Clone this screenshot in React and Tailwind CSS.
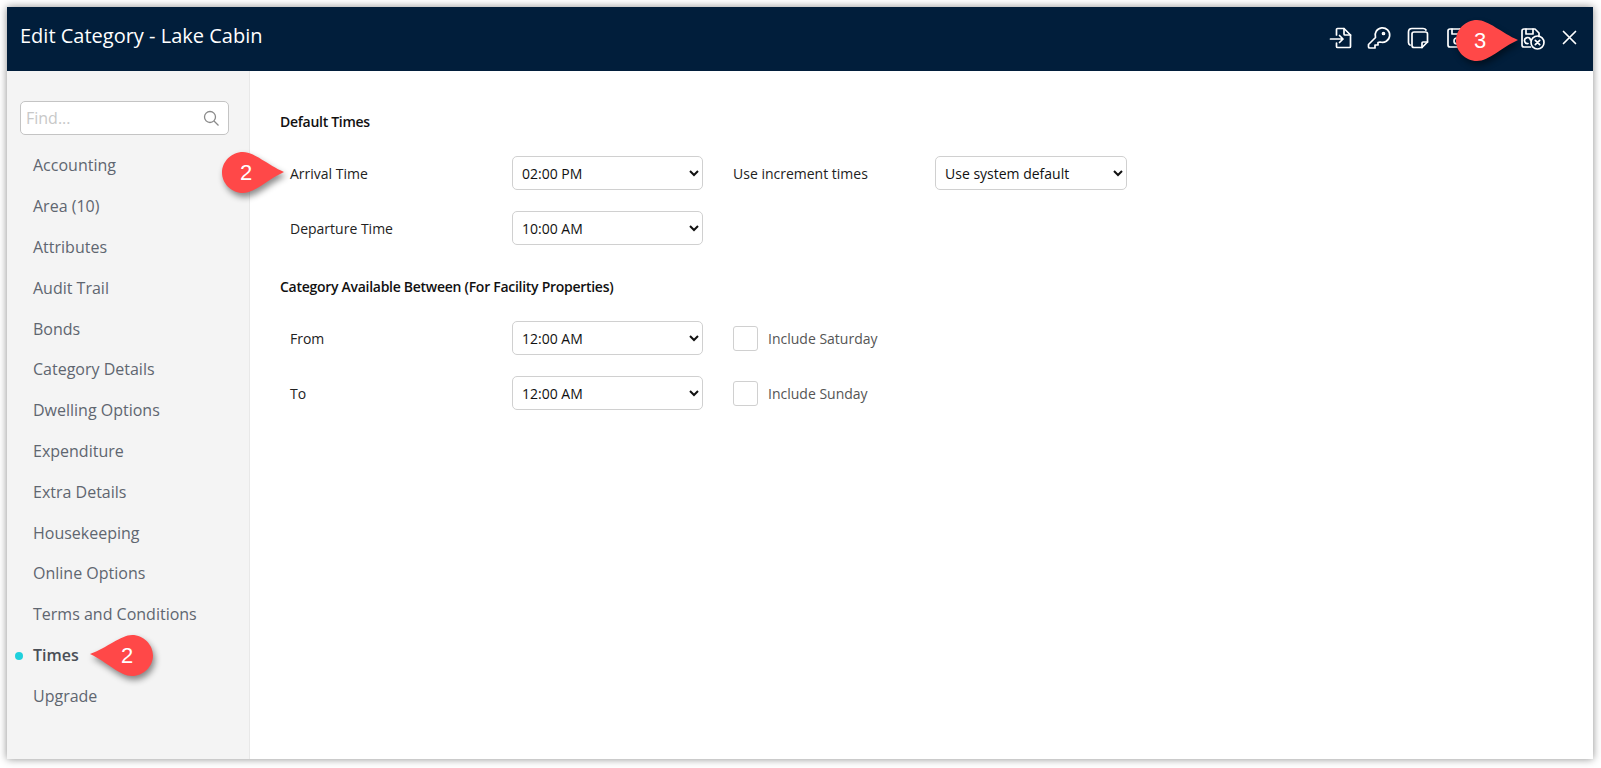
const items = ["Accounting","Area (10)","Attributes","Audit Trail","Bonds","Category Details","Dwelling Options","Expenditure","Extra Details","Housekeeping","Online Options","Terms and Conditions","Times","Upgrade"];

function Badge({ n, dir, className }) {
  const d = dir === "right"
    ? "M21 0 C32 0 46 13 62 20 C46 27 33 41 21 41 C9 41 0 31 0 20.500 C0 10 9 0 21 0 Z"
    : "M42 0 C31 0 17 13 0 19 C17 27 30 41 42 41 C54 41 63 31 63 20.500 C63 10 54 0 42 0 Z";
  return (
    <div className={`absolute w-[63px] h-[41px] ${className}`}>
      <svg width="63" height="41" viewBox="0 0 63 41" className="absolute inset-0 overflow-visible drop-shadow-[2px_4px_3px_rgba(0,0,0,0.45)]">
        <path d={d} fill="#ff4848" />
      </svg>
      <span className={`absolute top-0 h-[41px] leading-[41px] w-[48px] text-center text-white text-[22px] font-['Liberation_Sans',sans-serif] ${dir === "right" ? "left-0" : "right-[2px]"}`}>{n}</span>
    </div>
  );
}

function Select({ value, w = "w-[191px]" }) {
  return (
    <select defaultValue={value} className={`${w} h-[34px] rounded-[5px] border border-[#d0d0d0] bg-white pl-[5px] text-[14px] text-[#111] outline-none shrink-0`}>
      <option>{value}</option>
    </select>
  );
}

const Svg = ({ children, w = 24, cls = "" }) => (
  <svg width={w} height="24" viewBox={`0 0 ${w} 24`} fill="none" stroke="white" strokeWidth="1.700" strokeLinecap="round" strokeLinejoin="round" className={cls}>{children}</svg>
);

function Row({ label, value, children }) {
  return (
    <div className="flex items-center h-[34px]">
      <div className="w-[232px] pl-[10px] text-[14px] text-[#222] shrink-0">{label}</div>
      <Select value={value} />
      {children}
    </div>
  );
}

function Check({ label }) {
  return (
    <div className="flex items-center ml-[30px]">
      <span className="w-[25px] h-[25px] rounded-[3px] border border-[#d0d0d0] bg-white" />
      <span className="ml-[10px] text-[14px] text-[#555]">{label}</span>
    </div>
  );
}

export default function App() {
  return (
    <div className="w-[1601px] h-[768px] bg-white p-[7px] font-['Open_Sans',sans-serif] overflow-hidden relative">
      <div className="w-[1586px] h-[752px] flex flex-col shadow-[0_0_8px_rgba(0,0,0,0.45)] bg-white">
        <header className="h-[64px] bg-[#011e3b] flex items-center justify-between pl-[13px] pr-[16px] shrink-0">
          <h1 className="text-[20px] text-white -mt-[6px]">Edit Category - Lake Cabin</h1>
          <div className="flex items-center -mt-[2px]">
            <Svg cls="mr-[14px]"><path d="M7.500 9V3.500C7.500 3 8 2.500 8.500 2.500H15L21.500 9V20.500C21.500 21 21 21.500 20.500 21.500H8.500C8 21.500 7.500 21 7.500 20.500V17" /><path d="M15 2.500V8C15 8.600 15.400 9 16 9H21.500" /><path d="M1.500 13H14M10.500 9.500L14 13L10.500 16.500" /></Svg>
            <Svg cls="mr-[15px]"><path d="M8.500 11.500A7.300 7.300 0 1 1 13 16L11 16.500V19H8V22H3C2.200 22 1.500 21.500 1.500 21V18.500Z" /><circle cx="16.500" cy="7.500" r="1" /></Svg>
            <Svg cls="mr-[15px]"><path d="M4 19C3 18.500 2.500 17.500 2.500 16.500V6C2.500 4 4 2.500 6 2.500H17C18.500 2.500 19.500 3 20 4" /><path d="M6 8C6 6.800 6.800 6 8 6H19.500C20.700 6 21.500 6.800 21.500 8V16L16 21.500H8C6.800 21.500 6 20.700 6 19.500Z" /><path d="M21.500 16H17C16.300 16 16 16.300 16 17V21.500" /></Svg>
            <Svg cls="mr-[50px]"><path d="M3 5C3 3.800 3.800 3 5 3H17L21 7V19C21 20.200 20.200 21 19 21H5C3.800 21 3 20.200 3 19Z" /><path d="M7 3V8H15V3" /><circle cx="12" cy="15" r="3" /></Svg>
            <Svg w={26} cls="mr-[16px]"><path d="M11.500 21H5C3.800 21 3 20.200 3 19V5C3 3.800 3.800 3 5 3H16L20 7V10.500" /><path d="M7 3V8H14V3" /><path d="M11.500 14A3 3 0 1 0 9 17.500" /><circle cx="18.500" cy="16.500" r="6.500" /><path d="M16.300 14.300L20.700 18.700M20.700 14.300L16.300 18.700" /></Svg>
            <Svg w={16}><path d="M2.500 5.500L14.500 17.500M14.500 5.500L2.500 17.500" /></Svg>
          </div>
        </header>
        <div className="flex-1 flex min-h-0">
          <aside className="w-[243px] bg-[#f4f4f4] border-r border-[#e8e8e8] pl-[13px] pr-[20px] pt-[30px] shrink-0">
            <div className="h-[34px] rounded-[5px] border border-[#c4c4c4] bg-white flex items-center justify-between pl-[5px] pr-[8px]">
              <span className="text-[16px] text-[#c8c8c8]">Find...</span>
              <svg width="17" height="17" viewBox="0 0 17 17" fill="none" stroke="#8a8a8a" strokeWidth="1.300"><circle cx="7" cy="7" r="5.500" /><path d="M11 11L15.500 15.500" /></svg>
            </div>
            <ul className="mt-[10.400px]">
              {items.map((t) => (
                <li key={t} className={`relative h-[40.800px] leading-[40.800px] pl-[13px] text-[16px] ${t === "Times" ? "font-semibold text-[#4a4f57]" : "text-[#5f6670]"}`}>
                  {t === "Times" && <span className="absolute left-[-5px] top-[17px] w-[8px] h-[8px] rounded-full bg-[#1fd0dc]" />}
                  {t}
                </li>
              ))}
            </ul>
          </aside>
          <main className="flex-1 pl-[30px] pt-[41px]">
            <h2 className="text-[14px] font-semibold text-[#111] leading-[20px] tracking-[-0.28px]">Default Times</h2>
            <div className="mt-[24px] flex flex-col gap-[21px]">
              <Row label="Arrival Time" value="02:00 PM">
                <div className="w-[202px] ml-[30px] text-[14px] text-[#222] shrink-0">Use increment times</div>
                <Select value="Use system default" w="w-[192px]" />
              </Row>
              <Row label="Departure Time" value="10:00 AM" />
            </div>
            <h2 className="mt-[32px] text-[14px] font-semibold text-[#111] leading-[20px] tracking-[-0.28px]">Category Available Between (For Facility Properties)</h2>
            <div className="mt-[24px] flex flex-col gap-[21px]">
              <Row label="From" value="12:00 AM"><Check label="Include Saturday" /></Row>
              <Row label="To" value="12:00 AM"><Check label="Include Sunday" /></Row>
            </div>
          </main>
        </div>
      </div>
      <Badge n="2" dir="right" className="left-[222px] top-[152px]" />
      <Badge n="2" dir="left" className="left-[90px] top-[635px]" />
      <Badge n="3" dir="right" className="left-[1456px] top-[20px]" />
    </div>
  );
}
